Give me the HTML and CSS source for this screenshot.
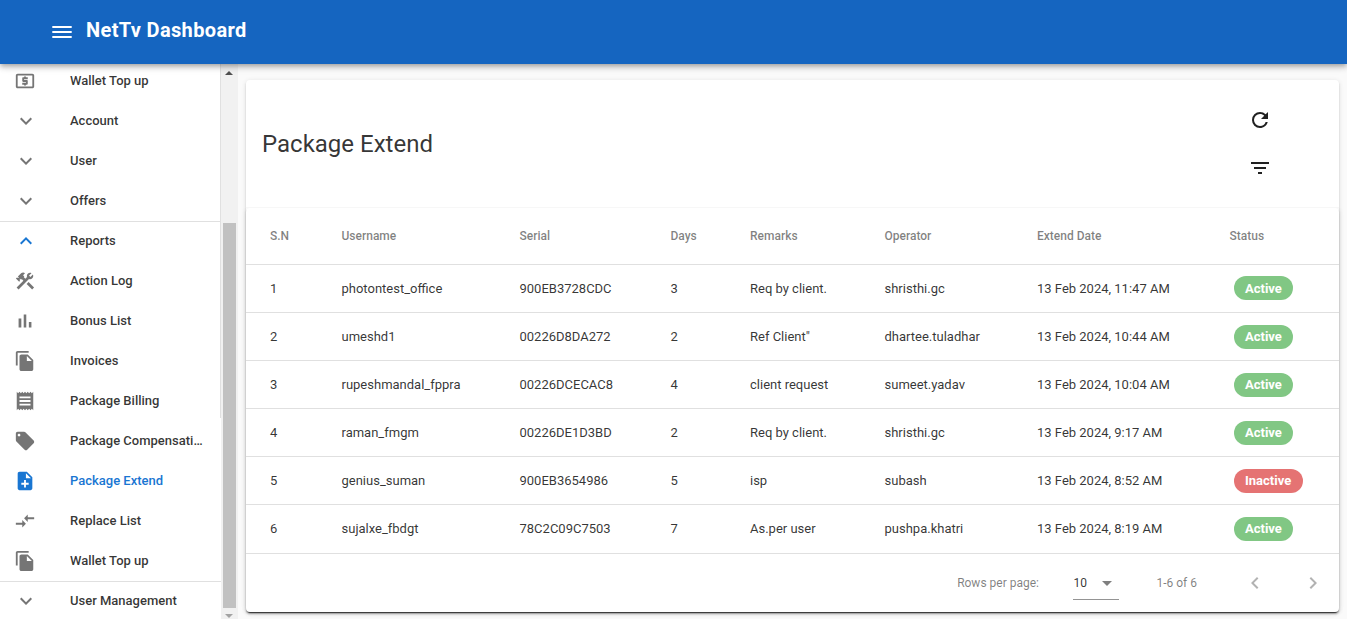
FILE: index.html
```html
<!DOCTYPE html>
<html lang="en">
<head>
<meta charset="utf-8">
<title>NetTv Dashboard</title>
<link rel="stylesheet" href="styles.css">
</head>
<body>
<svg class="sprite" aria-hidden="true">
  <symbol id="i-menu" viewBox="0 0 26 26"><path d="M3.3 7h19.4v2H3.3zM3.3 12h19.4v2H3.3zM3.3 17h19.4v2H3.3z"/></symbol>
  <symbol id="i-atm" viewBox="0 0 24 24"><path d="M11 17h2v-1h1c.55 0 1-.45 1-1v-3c0-.55-.45-1-1-1h-3v-1h4V8h-2V7h-2v1h-1c-.55 0-1 .45-1 1v3c0 .55.45 1 1 1h3v1H9v2h2v1zm9-13H4c-1.11 0-1.99.89-1.99 2L2 18c0 1.11.89 2 2 2h16c1.11 0 2-.89 2-2V6c0-1.11-.89-2-2-2zm0 14H4V6h16v12z"/></symbol>
  <symbol id="i-down" viewBox="0 0 24 24"><path d="M7.41 8.58L12 13.17l4.59-4.59L18 10l-6 6-6-6z"/></symbol>
  <symbol id="i-up" viewBox="0 0 24 24"><path d="M7.41 15.41L12 10.83l4.59 4.58L18 14l-6-6-6 6z"/></symbol>
  <symbol id="i-left" viewBox="0 0 24 24"><path d="M15.41 16.59L10.83 12l4.58-4.59L14 6l-6 6 6 6z"/></symbol>
  <symbol id="i-right" viewBox="0 0 24 24"><path d="M8.59 16.59L13.17 12 8.59 7.41 10 6l6 6-6 6z"/></symbol>
  <symbol id="i-tools" viewBox="0 0 24 24"><rect height="8.48" transform="matrix(0.7071 -0.7071 0.7071 0.7071 -6.8717 17.6255)" width="3" x="16.34" y="12.87"/><path d="M17.5,10c1.93,0,3.5-1.57,3.5-3.5c0-0.58-0.16-1.12-0.41-1.6l-2.7,2.7L16.4,6.11l2.7-2.7C18.62,3.16,18.08,3,17.5,3C15.57,3,14,4.57,14,6.5c0,0.41,0.08,0.8,0.21,1.16l-1.85,1.85l-1.78-1.78l0.71-0.71L9.88,5.61L12,3.49c-1.17-1.17-3.07-1.17-4.24,0L4.22,7.03l1.41,1.41H2.81L2.1,9.15l3.54,3.54l0.71-0.71V9.15l1.41,1.41l0.71-0.71l1.78,1.78l-7.41,7.41l2.12,2.12L16.34,9.79C16.7,9.92,17.09,10,17.5,10z"/></symbol>
  <symbol id="i-bars" viewBox="0 0 24 24"><path d="M5 9.2h3V19H5zM10.6 5h2.8v14h-2.8zm5.6 8H19v6h-2.8z"/></symbol>
  <symbol id="i-copy" viewBox="0 0 24 24"><path d="M16 1H4c-1.1 0-2 .9-2 2v14h2V3h12V1zm-1 4l6 6v10c0 1.1-.9 2-2 2H7.99C6.89 23 6 22.1 6 21l.01-14c0-1.1.89-2 1.99-2h7zm-1 7h5.5L14 6.5V12z"/></symbol>
  <symbol id="i-receipt" viewBox="0 0 24 24"><path d="M18 17H6v-2h12v2zm0-4H6v-2h12v2zm0-4H6V7h12v2zM3 22l1.5-1.5L6 22l1.5-1.5L9 22l1.5-1.5L12 22l1.5-1.5L15 22l1.5-1.5L18 22l1.5-1.5L21 22V2l-1.5 1.5L18 2l-1.5 1.5L15 2l-1.5 1.5L12 2l-1.5 1.5L9 2 7.5 3.5 6 2 4.5 3.5 3 2v20z"/></symbol>
  <symbol id="i-tag" viewBox="0 0 24 24"><path d="M21.41 11.58l-9-9C12.05 2.22 11.55 2 11 2H4c-1.1 0-2 .9-2 2v7c0 .55.22 1.05.59 1.42l9 9c.36.36.86.58 1.41.58.55 0 1.05-.22 1.41-.59l7-7c.37-.36.59-.86.59-1.41 0-.55-.23-1.06-.59-1.42zM5.5 7C4.67 7 4 6.33 4 5.5S4.67 4 5.5 4 7 4.67 7 5.5 6.33 7 5.5 7z"/></symbol>
  <symbol id="i-note" viewBox="0 0 24 24"><path d="M14 2H6c-1.1 0-1.99.9-1.99 2L4 20c0 1.1.89 2 1.99 2H18c1.1 0 2-.9 2-2V8l-6-6zm2 14h-3v3h-2v-3H8v-2h3v-3h2v3h3v2zm-3-7V3.5L18.5 9H13z"/></symbol>
  <symbol id="i-compare" viewBox="0 0 24 24"><path d="M9.01 14H2v2h7.01v3L13 15l-3.99-4v3zm5.98-1v-3H22V8h-7.01V5L11 9l3.99 4z"/></symbol>
  <symbol id="i-refresh" viewBox="0 0 24 24"><path d="M17.65 6.35A7.96 7.96 0 0 0 12 4a8 8 0 0 0-8 8 8 8 0 0 0 8 8c3.73 0 6.84-2.55 7.73-6h-2.08A5.99 5.99 0 0 1 12 18a6 6 0 0 1-6-6 6 6 0 0 1 6-6c1.66 0 3.14.69 4.22 1.78L13 11h7V4z"/></symbol>
  <symbol id="i-filter" viewBox="0 0 24 24"><path d="M6 13h12v-2H6zM3 6v2h18V6zM10 18h4v-2h-4z"/></symbol>
  <symbol id="i-caret" viewBox="0 0 24 24"><path d="M7 10l5 5 5-5z"/></symbol>
</svg>

<header class="topbar">
  <svg class="menu-icon"><use href="#i-menu"/></svg>
  <h1 class="brand">NetTv Dashboard</h1>
</header>

<div class="shell">
  <aside class="sidebar">
    <nav class="nav">
      <a class="item"><svg class="icon"><use href="#i-atm"/></svg><span class="label">Wallet Top up</span></a>
      <a class="item"><svg class="icon chevron"><use href="#i-down"/></svg><span class="label">Account</span></a>
      <a class="item"><svg class="icon chevron"><use href="#i-down"/></svg><span class="label">User</span></a>
      <a class="item"><svg class="icon chevron"><use href="#i-down"/></svg><span class="label">Offers</span></a>
      <a class="item divided open"><svg class="icon chevron"><use href="#i-up"/></svg><span class="label">Reports</span></a>
      <a class="item"><svg class="icon"><use href="#i-tools"/></svg><span class="label">Action Log</span></a>
      <a class="item"><svg class="icon"><use href="#i-bars"/></svg><span class="label">Bonus List</span></a>
      <a class="item"><svg class="icon"><use href="#i-copy"/></svg><span class="label">Invoices</span></a>
      <a class="item"><svg class="icon"><use href="#i-receipt"/></svg><span class="label">Package Billing</span></a>
      <a class="item"><svg class="icon"><use href="#i-tag"/></svg><span class="label">Package Compensati…</span></a>
      <a class="item active"><svg class="icon"><use href="#i-note"/></svg><span class="label">Package Extend</span></a>
      <a class="item"><svg class="icon"><use href="#i-compare"/></svg><span class="label">Replace List</span></a>
      <a class="item"><svg class="icon"><use href="#i-copy"/></svg><span class="label">Wallet Top up</span></a>
      <a class="item divided"><svg class="icon chevron"><use href="#i-down"/></svg><span class="label">User Management</span></a>
    </nav>
    <div class="scrollbar">
      <span class="arrow arrow-up"></span>
      <span class="thumb"></span>
      <span class="arrow arrow-down"></span>
    </div>
  </aside>

  <main class="content">
    <section class="card">
      <div class="card-head">
        <h2 class="title">Package Extend</h2>
        <div class="actions">
          <svg class="action"><use href="#i-refresh"/></svg>
          <svg class="action"><use href="#i-filter"/></svg>
        </div>
      </div>
      <div class="sheet">
        <div class="row head"><span>S.N</span><span>Username</span><span>Serial</span><span>Days</span><span>Remarks</span><span>Operator</span><span>Extend Date</span><span>Status</span></div>
        <div class="row first"><span>1</span><span>photontest_office</span><span>900EB3728CDC</span><span>3</span><span>Req by client.</span><span>shristhi.gc</span><span>13 Feb 2024, 11:47 AM</span><span><b class="chip">Active</b></span></div>
        <div class="row"><span>2</span><span>umeshd1</span><span>00226D8DA272</span><span>2</span><span>Ref Client"</span><span>dhartee.tuladhar</span><span>13 Feb 2024, 10:44 AM</span><span><b class="chip">Active</b></span></div>
        <div class="row"><span>3</span><span>rupeshmandal_fppra</span><span>00226DCECAC8</span><span>4</span><span>client request</span><span>sumeet.yadav</span><span>13 Feb 2024, 10:04 AM</span><span><b class="chip">Active</b></span></div>
        <div class="row"><span>4</span><span>raman_fmgm</span><span>00226DE1D3BD</span><span>2</span><span>Req by client.</span><span>shristhi.gc</span><span>13 Feb 2024, 9:17 AM</span><span><b class="chip">Active</b></span></div>
        <div class="row"><span>5</span><span>genius_suman</span><span>900EB3654986</span><span>5</span><span>isp</span><span>subash</span><span>13 Feb 2024, 8:52 AM</span><span><b class="chip inactive">Inactive</b></span></div>
        <div class="row last"><span>6</span><span>sujalxe_fbdgt</span><span>78C2C09C7503</span><span>7</span><span>As.per user</span><span>pushpa.khatri</span><span>13 Feb 2024, 8:19 AM</span><span><b class="chip">Active</b></span></div>
        <footer class="pager">
          <span class="pager-label">Rows per page:</span>
          <div class="select"><span>10</span><svg class="caret"><use href="#i-caret"/></svg></div>
          <span class="range">1-6 of 6</span>
          <svg class="page-btn"><use href="#i-left"/></svg>
          <svg class="page-btn"><use href="#i-right"/></svg>
        </footer>
      </div>
    </section>
  </main>
</div>
</body>
</html>
```
FILE: styles.css
```css
* { box-sizing: border-box; }

body {
  margin: 0;
  height: 619px;
  overflow: hidden;
  display: flex;
  flex-direction: column;
  background: #fafafa;
  color: rgba(0, 0, 0, .8);
  font-family: Roboto, sans-serif;
  font-size: 13px;
}

svg { fill: currentColor; flex: none; }
.sprite { display: none; }

.topbar {
  position: relative;
  z-index: 2;
  flex: none;
  height: 64px;
  padding-left: 49px;
  display: flex;
  align-items: center;
  background: #1565c0;
  color: #fff;
  box-shadow: 0 2px 4px -1px rgba(0, 0, 0, .2), 0 4px 5px rgba(0, 0, 0, .14), 0 1px 10px rgba(0, 0, 0, .12);
}
.menu-icon { width: 26px; height: 26px; }
.brand { margin: 0 0 4px 11px; font-size: 20px; font-weight: 700; line-height: 24px; letter-spacing: .36px; }

.shell { flex: 1; min-height: 0; display: flex; }

.sidebar { width: 238px; flex: none; display: flex; background: #fff; }
.nav { width: 221px; margin-top: -3px; display: flex; flex-direction: column; background: linear-gradient(#e0e0e0, #e0e0e0) 220px 0 / 1px 357px no-repeat; }
.item { flex: none; height: 40px; padding-left: 14px; display: flex; align-items: center; font-weight: 500; }
.divided { background: linear-gradient(#e0e0e0, #e0e0e0) 0 0 / 221px 1px no-repeat; }
.icon { width: 22px; height: 22px; margin-right: 34px; color: #757575; }
.chevron { width: 24px; height: 24px; margin-right: 32px; }
.open .icon { color: #1976d2; }
.active { color: #1976d2; }
.active .icon { color: #1976d2; }
.label { width: 140px; line-height: 20px; white-space: nowrap; }

.scrollbar {
  width: 17px;
  padding: 7px 2px 1px 1px;
  display: flex;
  flex-direction: column;
  align-items: center;
  background: #f1f1f1;
}
.arrow { border: 4px solid transparent; border-top: 0; border-bottom-color: #505050; }
.arrow-down { margin-top: auto; border-top: 4px solid #a3a3a3; border-bottom: 0; }
.thumb { width: 13px; height: 385px; margin: 148px 0 0 1px; background: #c1c1c1; }

.content { flex: 1; padding: 16px 8px 7px; }
.card {
  height: 532px;
  border-radius: 4px;
  background: #fff;
  box-shadow: 0 3px 1px -2px rgba(0, 0, 0, .2), 0 2px 2px rgba(0, 0, 0, .14), 0 1px 5px rgba(0, 0, 0, .12);
}
.card-head { height: 128px; padding: 0 67px 0 16px; display: flex; align-items: center; justify-content: space-between; border-bottom: 1px solid #f7f7f7; }
.title { margin: 1px 0 0; font-size: 24px; font-weight: 400; line-height: 32px; }
.actions { margin-top: 1px; display: flex; flex-direction: column; gap: 24px; }
.action { width: 24px; height: 24px; color: #212121; }

.sheet {
  border-radius: 4px;
  background: #fff;
  box-shadow: 0 3px 1px -2px rgba(0, 0, 0, .4), 0 2px 2px rgba(0, 0, 0, .14), 0 1px 5px rgba(0, 0, 0, .12), 0 1px 0 rgba(0, 0, 0, .25);
  clip-path: inset(0 -8px -8px);
}
.row {
  height: 48px;
  display: grid;
  grid-template-columns: 71.5px 178px 151px 79.5px 134.5px 152.5px 192.5px 1fr;
  align-items: center;
  border-bottom: 1px solid #e0e0e0;
}
.row > span { padding-left: 24px; }
.head { height: 57px; color: rgba(0, 0, 0, .5); font-size: 12px; font-weight: 500; }
.last { height: 49px; padding-bottom: 1px; }
.chip {
  display: block;
  width: fit-content;
  height: 24px;
  margin: 1px 0 0 4px;
  padding: 0 11.5px;
  border-radius: 12px;
  background: #81c784;
  color: #fff;
  font-weight: 700;
  line-height: 24px;
}
.first .chip { margin: 0 0 1px 4px; line-height: 26px; }
.inactive { background: #e57373; }

.pager { height: 58px; padding-right: 14px; display: flex; align-items: center; justify-content: flex-end; color: rgba(0, 0, 0, .5); font-size: 12px; }
.select {
  width: 46px;
  height: 34px;
  margin: 0 37px 0 34.5px;
  display: flex;
  align-items: center;
  justify-content: space-between;
  border-bottom: 1px solid #949494;
}
.select span { padding-top: 1px; color: rgba(0, 0, 0, .8); }
.caret { width: 24px; height: 24px; }
.range { margin-right: 46px; }
.page-btn { width: 24px; height: 24px; color: rgba(0, 0, 0, .3); }
.page-btn + .page-btn { margin-left: 34px; }
```
